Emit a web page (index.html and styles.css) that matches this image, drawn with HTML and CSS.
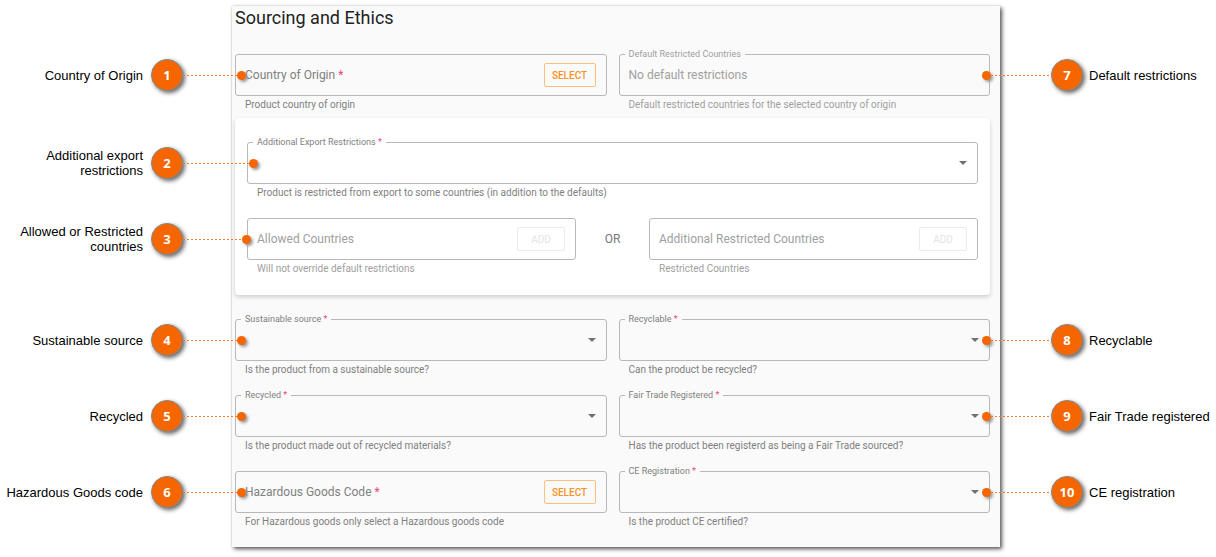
FILE: index.html
```
<!DOCTYPE html>
<html lang="en">
  <head>
    <title>Sourcing and Ethics</title>
    <meta charset="utf-8" />
    <link rel="stylesheet" href="styles.css">
  </head>
  <body>
    <form class="panel">
      <h1 class="title">Sourcing and Ethics</h1>

      <div class="row">
        <div class="field">
          <div class="box">
            <label class="label" for="origin">Country of Origin <span class="star">*</span></label>
            <input class="input" type="text" id="origin" name="origin" required />
            <button class="button" type="button">SELECT</button>
            <div class="callout left">
              <span class="text">Country of Origin</span><span class="number">1</span><span class="line"></span><span class="dot"></span>
            </div>
          </div>
          <p class="help">Product country of origin</p>
        </div>
        <div class="field off">
          <div class="box">
            <label class="label top" for="defaults">Default Restricted Countries</label>
            <input class="input" type="text" id="defaults" name="defaults" value="No default restrictions" disabled />
            <div class="callout right">
              <span class="dot"></span><span class="line"></span><span class="number">7</span><span class="text">Default restrictions</span>
            </div>
          </div>
          <p class="help">Default restricted countries for the selected country of origin</p>
        </div>
      </div>

      <div class="card">
        <div class="field">
          <div class="box">
            <label class="label top" for="restrictions">Additional Export Restrictions <span class="star">*</span></label>
            <select class="select" id="restrictions" name="restrictions" required>
              <option value=""></option>
            </select>
            <svg class="arrow" viewBox="0 0 8 4"><path d="M0 0h8L4 4z" /></svg>
            <div class="callout left inner">
              <span class="text">Additional export restrictions</span><span class="number">2</span><span class="line"></span><span class="dot"></span>
            </div>
          </div>
          <p class="help">Product is restricted from export to some countries (in addition to the defaults)</p>
        </div>
        <div class="row either">
          <div class="field off">
            <div class="box">
              <label class="label" for="allowed">Allowed Countries</label>
              <input class="input" type="text" id="allowed" name="allowed" disabled />
              <button class="button" type="button" disabled>ADD</button>
              <div class="callout left edge">
                <span class="text">Allowed or Restricted countries</span><span class="number">3</span><span class="line"></span><span class="dot"></span>
              </div>
            </div>
            <p class="help">Will not override default restrictions</p>
          </div>
          <div class="or">OR</div>
          <div class="field off">
            <div class="box">
              <label class="label" for="restricted">Additional Restricted Countries</label>
              <input class="input" type="text" id="restricted" name="restricted" disabled />
              <button class="button" type="button" disabled>ADD</button>
            </div>
            <p class="help">Restricted Countries</p>
          </div>
        </div>
      </div>

      <div class="row">
        <div class="field">
          <div class="box">
            <label class="label top" for="sustainable">Sustainable source <span class="star">*</span></label>
            <select class="select" id="sustainable" name="sustainable" required>
              <option value=""></option>
            </select>
            <svg class="arrow" viewBox="0 0 8 4"><path d="M0 0h8L4 4z" /></svg>
            <div class="callout left">
              <span class="text">Sustainable source</span><span class="number">4</span><span class="line"></span><span class="dot"></span>
            </div>
          </div>
          <p class="help">Is the product from a sustainable source?</p>
        </div>
        <div class="field">
          <div class="box">
            <label class="label top" for="recyclable">Recyclable <span class="star">*</span></label>
            <select class="select" id="recyclable" name="recyclable" required>
              <option value=""></option>
            </select>
            <svg class="arrow" viewBox="0 0 8 4"><path d="M0 0h8L4 4z" /></svg>
            <div class="callout right">
              <span class="dot"></span><span class="line"></span><span class="number">8</span><span class="text">Recyclable</span>
            </div>
          </div>
          <p class="help">Can the product be recycled?</p>
        </div>

        <div class="field">
          <div class="box">
            <label class="label top" for="recycled">Recycled <span class="star">*</span></label>
            <select class="select" id="recycled" name="recycled" required>
              <option value=""></option>
            </select>
            <svg class="arrow" viewBox="0 0 8 4"><path d="M0 0h8L4 4z" /></svg>
            <div class="callout left">
              <span class="text">Recycled</span><span class="number">5</span><span class="line"></span><span class="dot"></span>
            </div>
          </div>
          <p class="help">Is the product made out of recycled materials?</p>
        </div>
        <div class="field">
          <div class="box">
            <label class="label top" for="fair_trade">Fair Trade Registered <span class="star">*</span></label>
            <select class="select" id="fair_trade" name="fair_trade" required>
              <option value=""></option>
            </select>
            <svg class="arrow" viewBox="0 0 8 4"><path d="M0 0h8L4 4z" /></svg>
            <div class="callout right">
              <span class="dot"></span><span class="line"></span><span class="number">9</span><span class="text">Fair Trade registered</span>
            </div>
          </div>
          <p class="help">Has the product been registerd as being a Fair Trade sourced?</p>
        </div>

        <div class="field">
          <div class="box">
            <label class="label" for="hazardous">Hazardous Goods Code <span class="star">*</span></label>
            <input class="input" type="text" id="hazardous" name="hazardous" required />
            <button class="button" type="button">SELECT</button>
            <div class="callout left">
              <span class="text">Hazardous Goods code</span><span class="number">6</span><span class="line"></span><span class="dot"></span>
            </div>
          </div>
          <p class="help">For Hazardous goods only select a Hazardous goods code</p>
        </div>
        <div class="field">
          <div class="box">
            <label class="label top" for="ce">CE Registration <span class="star">*</span></label>
            <select class="select" id="ce" name="ce" required>
              <option value=""></option>
            </select>
            <svg class="arrow" viewBox="0 0 8 4"><path d="M0 0h8L4 4z" /></svg>
            <div class="callout right">
              <span class="dot"></span><span class="line"></span><span class="number">10</span><span class="text">CE registration</span>
            </div>
          </div>
          <p class="help">Is the product CE certified?</p>
        </div>
      </div>
    </form>
  </body>
</html>
```
FILE: styles.css
```
* {
  box-sizing: border-box;
}

body {
  margin: 0;
  padding: 6px 216px 10px 232px;
  background: #fff;
  font-family: Roboto, sans-serif;
}

.panel {
  padding: 0 10px 16px 3px;
  background: #fafafa;
  box-shadow: 2px 2px 4px #555, 0 0 2px #ddd;
}

.title {
  margin: 0 0 24px;
  font-size: 18px;
  font-weight: normal;
  line-height: 24px;
  color: #222;
}

.row {
  display: grid;
  grid-template-columns: 1fr 1fr;
  gap: 16px 12px;
}

.card {
  margin: 4px 0 24px;
  padding: 24px 12px 17px;
  background: #fff;
  border-radius: 4px;
  box-shadow: 0 2px 4px #ccc;
}

.either {
  grid-template-columns: 1fr 49px 1fr;
  margin-top: 16px;
}

.or {
  line-height: 42px;
  font-size: 12px;
  text-align: center;
  color: #777;
}

/* fields */
.box {
  position: relative;
  display: flex;
  align-items: center;
  height: 42px;
  padding: 0 10px 0 9px;
  border: 1px solid #b8b8b8;
  border-radius: 3px;
}

.label {
  font-size: 12px;
  color: #808080;
}

.label.top {
  position: absolute;
  top: -7px;
  left: 5px;
  padding: 0 4px;
  background: #fafafa;
  font-size: 9px;
  line-height: 12px;
}

.card .label.top {
  background: #fff;
}

.star {
  color: #f0437c;
}

.input,
.select {
  flex: 1;
  min-width: 0;
  height: 40px;
  padding: 0;
  border: none;
  outline: none;
  background: none;
  appearance: none;
  font-family: inherit;
  font-size: 12px;
  color: #666;
}

.arrow {
  width: 8px;
  height: 4px;
  fill: #707070;
}

.button {
  width: 52px;
  height: 24px;
  padding: 0;
  border: 1px solid #fbc07f;
  border-radius: 2px;
  background: none;
  font-family: inherit;
  font-size: 10px;
  font-weight: 500;
  color: #f79226;
}

.button:disabled {
  width: 48px;
  border-color: #ebebeb;
  font-weight: normal;
  color: #e4e4e4;
}

.help {
  margin: 0;
  padding: 3px 10px;
  font-size: 10px;
  line-height: 12px;
  color: #808080;
}

.off .label,
.off .input,
.off .help {
  color: #a0a0a0;
}

/* numbered callouts, pinned to the field that they explain */
.callout {
  position: absolute;
  top: 0;
  bottom: 0;
  z-index: 1;
  display: flex;
  align-items: center;
  pointer-events: none;
  font-family: "Liberation Sans", Arial, sans-serif;
  font-size: 13px;
  line-height: 15px;
  color: #000;
}

.left {
  right: calc(100% - 10px);
}

.edge {
  right: calc(100% - 3px);
}

.right {
  left: calc(100% - 7px);
}

.text {
  width: 143px;
}

.left .text {
  margin-right: 8px;
  text-align: right;
}

.right .text {
  width: max-content;
  margin-left: 6px;
}

.number {
  flex: none;
  width: 32px;
  border: 1px solid #888;
  border-radius: 50%;
  background: #f56600;
  box-shadow: 2px 2px 4px #666;
  font-family: "Open Sans", sans-serif;
  font-weight: bold;
  line-height: 30px;
  text-align: center;
  color: #fff;
}

.line {
  flex: none;
  width: 54px;
  height: 1px;
  background: repeating-linear-gradient(to right, #f98030 0 2px, transparent 2px 4px);
}

.inner .line {
  width: 66px;
}

.edge .line {
  width: 59px;
}

.right .line {
  width: 60px;
}

.dot {
  flex: none;
  width: 9px;
  height: 9px;
  border-radius: 50%;
  background: #f56600;
  box-shadow: 2px 2px 3px #999;
}
```
